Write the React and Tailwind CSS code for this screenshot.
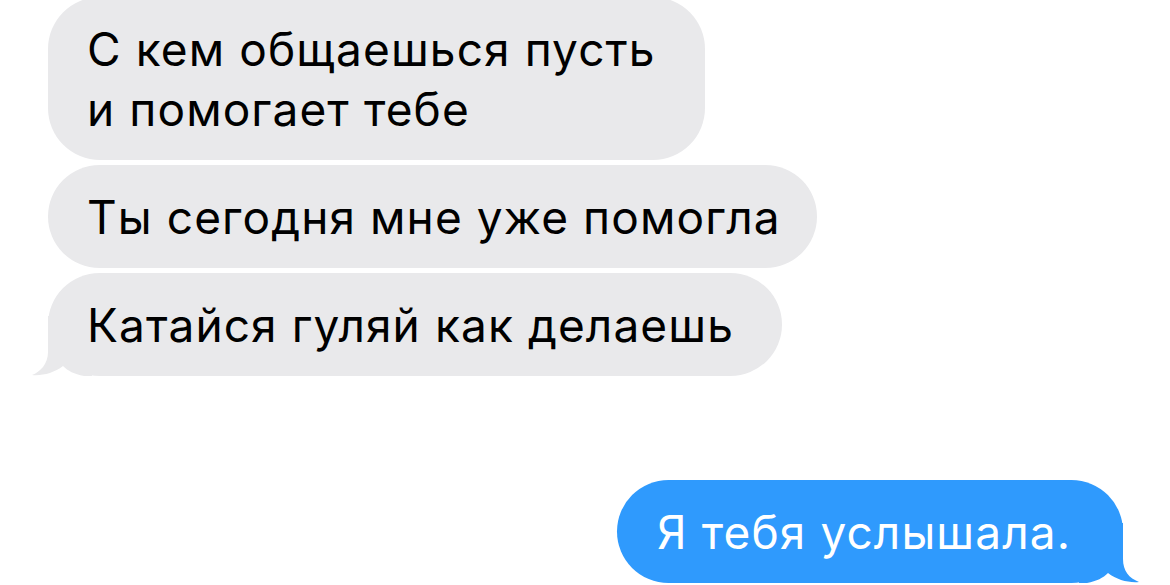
const font = { fontFamily: "Inter, 'Noto Sans', sans-serif" };

const LeftTail = () => (
  <svg className="absolute left-[-16px] bottom-0" width="60" height="60" viewBox="0 0 60 60">
    <path d="M16,0 L16,36 C16,48 8,56 0,59 C10,60 22,57 31,50 C36,55 42,58 52,60 L60,60 L60,0 Z" fill="#e9e9eb" />
  </svg>
);

const RightTail = () => (
  <svg className="absolute right-[-16px] bottom-0" width="60" height="60" viewBox="0 0 60 60">
    <path d="M44,0 L44,36 C44,48 50,55 60,59 C50,60 38,57 29,50 C24,55 18,58 8,60 L0,60 L0,0 Z" fill="#2f9afd" />
  </svg>
);

const Bubble = ({ text, width, tail }) => (
  <div
    className="relative rounded-[52px] bg-[#e9e9eb] py-[21.5px] pl-[39px] text-[46px] leading-[60px] tracking-[1.1px] text-black"
    style={{ width }}
  >
    {tail && <LeftTail />}
    <div className="relative">{text}</div>
  </div>
);

export default function App() {
  return (
    <div className="h-[585px] w-[1170px] overflow-hidden bg-white" style={font}>
      <div className="flex flex-col items-start pl-[48px] mt-[-3px] gap-[5px]">
        <Bubble width="657px" text={<>С кем общаешься пусть<br />и помогает тебе</>} />
        <Bubble width="769px" text="Ты сегодня мне уже помогла" />
        <Bubble width="734px" text="Катайся гуляй как делаешь" tail />
      </div>
      <div className="mt-[104px] flex justify-end pr-[47px]">
        <div className="relative w-[506px] rounded-[52px] bg-[#2f9afd] py-[21.5px] pl-[40px] text-[46px] leading-[60px] tracking-[1.1px] text-white">
          <RightTail />
          <div className="relative">Я тебя услышала.</div>
        </div>
      </div>
    </div>
  );
}
